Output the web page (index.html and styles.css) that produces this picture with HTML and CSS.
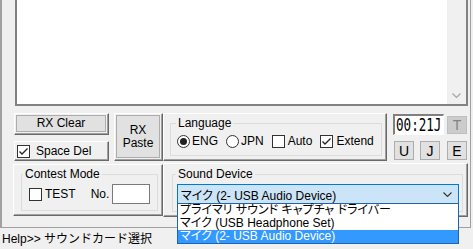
FILE: index.html
```html
<!DOCTYPE html>
<html lang="ja">
<head>
  <meta charset="UTF-8" />
  <title>Sound Device</title>
  <link rel="stylesheet" href="styles.css">
</head>
<body>

  <div class="window">
    <div class="main">
      <div class="rx">
        <div class="vscroll">
          <svg width="9" height="5" viewBox="0 0 9 5"><path d="M0.5 0.5 L4.5 4.5 L8.5 0.5" fill="none" stroke="#a6a6a6" stroke-width="1.2"/></svg>
        </div>
      </div>

      <div class="controls">
        <div class="left-top">
          <div class="raised btn-wrap"><div class="btn">RX Clear</div></div>
          <div class="raised btn-wrap paste"><div class="btn">RX<br>Paste</div></div>
          <div class="raised space">
            <span class="check"><svg width="11" height="11" viewBox="0 0 11 11"><path d="M1.5 5.5 L4 8 L9.5 2.5" fill="none" stroke="#222" stroke-width="1.3"/></svg></span>
            <span>Space Del</span>
          </div>
        </div>

        <div class="raised lang-panel">
          <fieldset class="group lang">
            <legend>Language</legend>
            <div class="opts">
              <span class="opt"><span class="radio on"></span>ENG</span>
              <span class="opt"><span class="radio"></span>JPN</span>
              <span class="opt chk"><span class="check"></span>Auto</span>
              <span class="opt chk"><span class="check"><svg width="11" height="11" viewBox="0 0 11 11"><path d="M1.5 5.5 L4 8 L9.5 2.5" fill="none" stroke="#222" stroke-width="1.3"/></svg></span>Extend</span>
            </div>
          </fieldset>
        </div>

        <div class="clock">
          <div class="clock-top">
            <div class="time"><span>00:21J</span></div>
            <div class="key off tkey">T</div>
          </div>
          <div class="clock-bottom">
            <div class="key k1">U</div>
            <div class="key k2">J</div>
            <div class="key k3">E</div>
          </div>
        </div>

        <div class="raised contest">
          <fieldset class="group contest-group">
            <legend>Contest Mode</legend>
            <div class="contest-row">
              <span class="check"></span>
              <span class="test-label">TEST</span>
              <span class="no-label">No.</span>
              <span class="no-input"></span>
            </div>
          </fieldset>
        </div>

        <div class="raised sound">
          <fieldset class="group sound-group">
            <legend>Sound Device</legend>
            <div class="combo">
              <span class="combo-text">マイク (2- USB Audio Device)</span>
              <svg width="9" height="5" viewBox="0 0 9 5"><path d="M0.5 0.5 L4.5 4.5 L8.5 0.5" fill="none" stroke="#333" stroke-width="1.1"/></svg>
              <div class="dropdown">
                <div class="item">プライマリ サウンド キャプチャ ドライバー</div>
                <div class="item">マイク (USB Headphone Set)</div>
                <div class="item selected">マイク (2- USB Audio Device)</div>
              </div>
            </div>
          </fieldset>
        </div>
      </div>
    </div>

    <div class="status">Help&gt;&gt; サウンドカード選択</div>
  </div>

</body>
</html>
```

FILE: styles.css
```css
* {
  box-sizing: border-box;
}

body {
  margin: 0;
  background-color: #f0f0f0;
  font-family: "Liberation Sans", "Noto Sans CJK JP", sans-serif;
  font-size: 12px;
  color: #000;
}

.window {
  width: 473px;
  height: 249px;
  overflow: hidden;
}

.main {
  width: 471px;
  height: 228px;
  border-left: 2px solid #a0a0a0;
  border-right: 1px solid #a0a0a0;
  border-bottom: 1px solid #a0a0a0;
  padding-right: 2px;
}

.rx {
  margin-left: 13px;
  width: 453px;
  height: 106px;
  border: 2px solid #828282;
  border-top: 0;
  background: white;
  display: flex;
  justify-content: flex-end;
}

.vscroll {
  width: 19px;
  background: #f0f0f0;
  display: flex;
  align-items: flex-end;
  justify-content: center;
  padding-bottom: 6px;
}

.controls {
  margin: 7px 0 0 11px;
  display: grid;
  grid-template-columns: 150px 224px 81px;
  grid-template-rows: 48px 54px;
  row-gap: 2px;
}

.raised {
  border: 1px solid;
  border-color: #fff #696969 #696969 #fff;
  box-shadow: inset -1px -1px #a0a0a0;
}

/* left block */
.left-top {
  display: grid;
  grid-template-columns: 95px 49px;
  grid-template-rows: 22px 20px;
  column-gap: 5px;
  row-gap: 6px;
  padding-left: 1px;
}

.btn-wrap {
  display: flex;
  padding: 1px 2px 2px 1px;
}

.btn {
  flex: 1;
  border: 1px solid #adadad;
  background: #e1e1e1;
  display: flex;
  align-items: center;
  justify-content: center;
  text-align: center;
  line-height: 13px;
}

.paste {
  grid-column: 2;
  grid-row: 1 / span 2;
}

.space {
  display: flex;
  align-items: center;
  gap: 6px;
  padding-left: 2px;
}

.check {
  width: 13px;
  height: 13px;
  border: 1px solid #333;
  background: white;
  display: inline-flex;
  align-items: center;
  justify-content: center;
  flex: none;
}

.radio {
  width: 13px;
  height: 13px;
  border: 1px solid #333;
  border-radius: 50%;
  background: white;
  display: inline-flex;
  align-items: center;
  justify-content: center;
  flex: none;
}

.radio.on::after {
  content: "";
  width: 7px;
  height: 7px;
  border-radius: 50%;
  background: #222;
}

/* group boxes */
.group {
  margin: 0;
  height: 100%;
  min-width: 0;
  border: 1px solid #dcdcdc;
  padding: 0;
}

.group legend {
  padding: 0 2px;
  line-height: 14px;
}

.lang-panel {
  padding: 2px 4px 0 6px;
}

.lang {
  height: 40px;
  padding: 0 5px;
}

.opts {
  display: flex;
  align-items: center;
  gap: 8px;
  margin-top: 4px;
  padding-left: 1px;
  height: 14px;
}

.opt {
  display: flex;
  align-items: center;
  gap: 2px;
}

.opt.chk {
  gap: 3px;
}

/* clock */
.clock {
  padding-left: 6px;
}

.clock-top {
  display: flex;
  align-items: flex-start;
  height: 22px;
}

.time {
  margin-top: 1px;
  width: 51px;
  height: 21px;
  border-style: solid;
  border-width: 2px 1px 1px 2px;
  border-color: #808080 #fff #fff #808080;
  background: white;
  display: flex;
  align-items: center;
  justify-content: center;
  overflow: hidden;
}

.time span {
  display: inline-block;
  font-family: "DejaVu Sans Mono", monospace;
  font-size: 17px;
  line-height: 17px;
  transform: scaleX(0.74);
}

.key {
  width: 20px;
  height: 19px;
  border: 1px solid #adadad;
  background: #e1e1e1;
  font-size: 14px;
  display: flex;
  align-items: center;
  justify-content: center;
}

.key.off {
  background: #cccccc;
  border-color: #bfbfbf;
  color: #838383;
}

.tkey {
  margin: 3px 0 0 3px;
  height: 18px;
}

.clock-bottom {
  display: flex;
  margin-top: 6px;
}

.k1 { margin-left: 1px; }
.k2 { margin-left: 6px; }
.k3 { margin-left: 7px; }

/* contest */
.contest {
  margin-top: 1px;
  height: 52px;
  padding: 2px 4px 4px 7px;
}

.contest-group {
  padding: 0 1px;
}

.contest-row {
  display: flex;
  align-items: center;
  height: 20px;
  margin-top: 3px;
  padding-left: 6px;
}

.test-label {
  margin-left: 3px;
}

.no-label {
  margin-left: 15px;
}

.no-input {
  margin-left: 3px;
  width: 38px;
  height: 20px;
  border: 1px solid #7a7a7a;
  background: white;
}

/* sound device */
.sound {
  grid-column: 2 / span 2;
  height: 54px;
  padding: 3px 4px 4px 8px;
}

.sound-group {
  padding: 0 3px;
}

.combo {
  position: relative;
  margin: 3px 0 0 1px;
  width: 282px;
  height: 20px;
  border: 1px solid #0078d7;
  background: #cce4f7;
  display: flex;
  align-items: center;
  justify-content: space-between;
  padding: 0 6px 0 3px;
}

.combo-text,
.item {
  font-feature-settings: "palt";
  white-space: nowrap;
}

.dropdown {
  position: absolute;
  z-index: 1;
  top: 100%;
  left: -1px;
  width: 282px;
  border: 1px solid #1f63a8;
  background: white;
}

.item {
  height: 13px;
  line-height: 13px;
  padding-left: 2px;
}

.item.selected {
  background: #3399ff;
  color: white;
}

.status {
  height: 21px;
  padding: 1px 0 0 2px;
  line-height: 20px;
  white-space: nowrap;
}
```
